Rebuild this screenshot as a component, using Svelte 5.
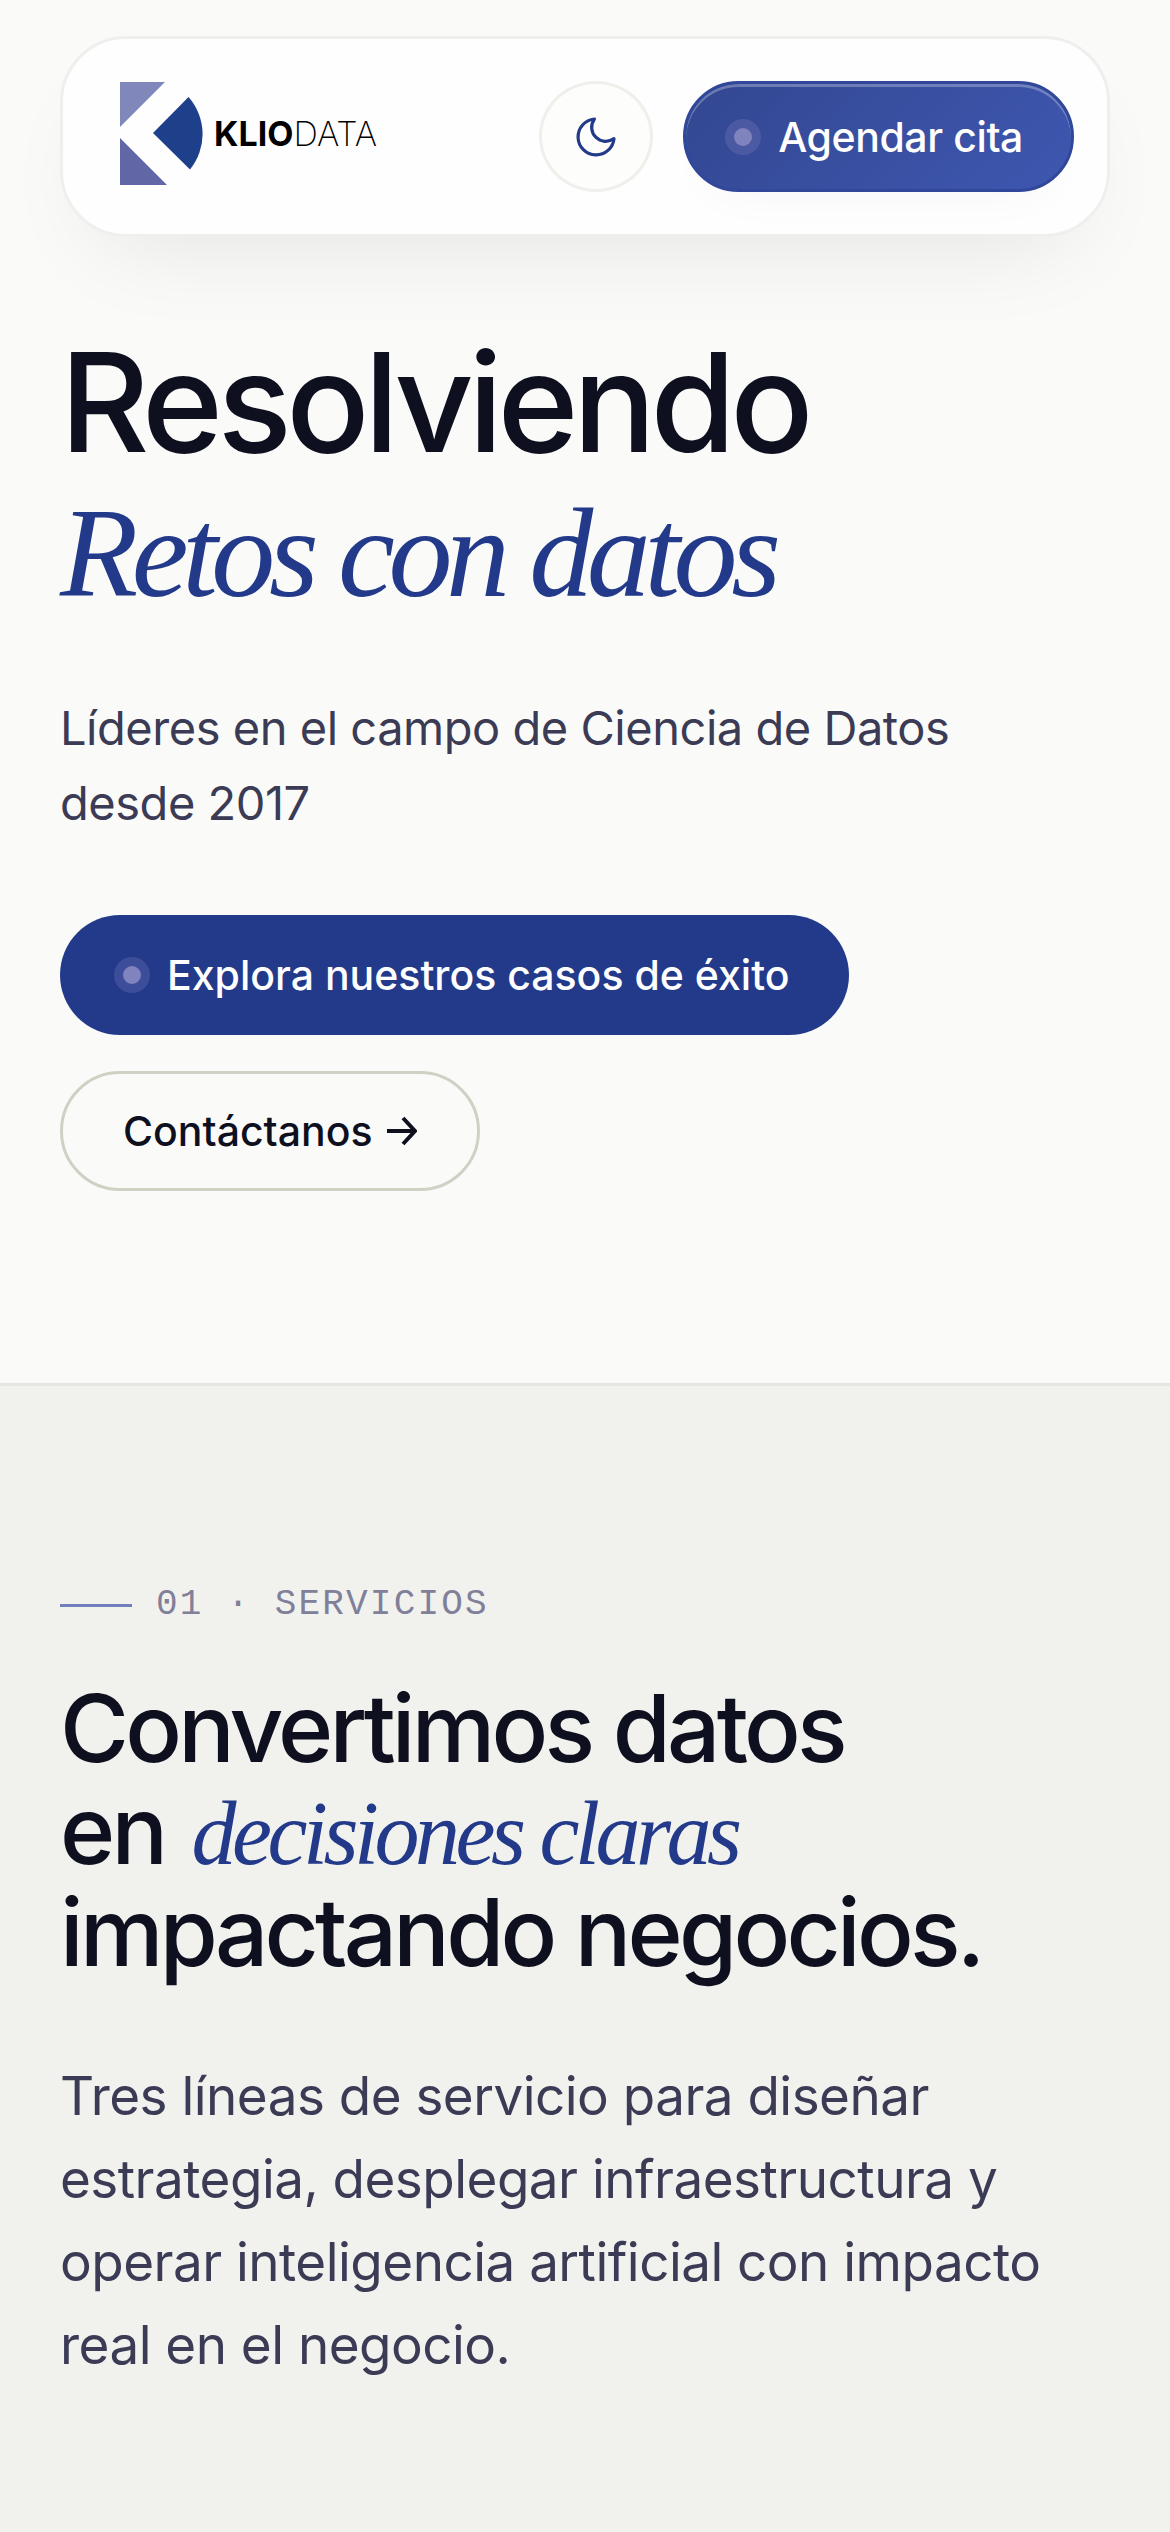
<script lang="ts">
    let dark = false;

    const service = {
        index: '01',
        label: 'Servicios',
        text: 'Tres líneas de servicio para diseñar estrategia, desplegar infraestructura y operar inteligencia artificial con impacto real en el negocio.'
    };
</script>

<div class="page">
    <header class="nav">
        <a class="brand" href="#inicio" aria-label="Kliodata">
            <svg class="mark" viewBox="0 0 84 104" aria-hidden="true">
                <path d="M0 0h45L0 45z" fill="#8088bb" />
                <path d="M0 56v47h47z" fill="#6066a6" />
                <path d="M33 51 68.500 15A56 56 0 0 1 70 87.500z" fill="#1e408b" />
            </svg>
            <span class="wordmark"><b>KLIO</b>DATA</span>
        </a>
        <div class="actions">
            <button
                class="theme"
                type="button"
                aria-label="Cambiar tema"
                aria-pressed={dark}
                on:click={() => (dark = !dark)}
            >
                <svg viewBox="0 0 24 24" aria-hidden="true">
                    <path d="M21 12.790A9 9 0 1 1 11.210 3 7 7 0 0 0 21 12.790z" />
                </svg>
            </button>
            <a class="btn cta" href="#cita"><span class="dot"></span>Agendar cita</a>
        </div>
    </header>

    <section class="hero" id="inicio">
        <h1>Resolviendo<br /><em>Retos con datos</em></h1>
        <p>Líderes en el campo de Ciencia de Datos desde 2017</p>
        <div class="links">
            <a class="btn primary" href="#casos"><span class="dot"></span>Explora nuestros casos de éxito</a>
            <a class="btn outline" href="#contacto">
                Contáctanos
                <svg class="arrow" viewBox="0 0 30 30" aria-hidden="true">
                    <path d="M0 15h28M16 2l12 13-12 13" />
                </svg>
            </a>
        </div>
    </section>

    <section class="services" id="servicios">
        <div class="eyebrow">{service.index} · {service.label}</div>
        <h2>Convertimos datos<br />en <em>decisiones claras</em><br />impactando negocios.</h2>
        <p>{service.text}</p>
    </section>
</div>

<style>
    :global(body) {
        margin: 0;
        background: #f1f2ed;
    }
    .page {
        --ink: #0f101f;
        --soft: #3b3b55;
        --blue: #233a8b;
        min-height: 100vh;
        display: flex;
        flex-direction: column;
        background: #fafbf8;
        color: var(--ink);
        font-family: Inter, "Liberation Sans", sans-serif;
    }
    a {
        color: inherit;
        text-decoration: none;
    }
    h1,
    h2,
    p {
        margin: 0;
    }

    .nav {
        display: flex;
        align-items: center;
        justify-content: space-between;
        margin: 36px 60px 0;
        padding: 42px 33px 42px 57px;
        border: 3px solid #efefed;
        border-radius: 66px;
        background: #fefefe;
        box-shadow: 0 42px 96px -42px rgba(15, 16, 31, 0.1);
    }
    .brand {
        display: flex;
        align-items: center;
        gap: 10px;
        padding-bottom: 6px;
    }
    .mark {
        width: 84px;
        height: 104px;
    }
    .wordmark {
        color: #000;
        font-size: 34px;
        line-height: 40px;
        font-weight: 200;
    }
    .wordmark b {
        font-weight: 700;
    }
    .actions {
        display: flex;
        align-items: center;
        gap: 30px;
    }
    .theme {
        display: grid;
        place-items: center;
        box-sizing: border-box;
        width: 114px;
        height: 111px;
        padding: 0;
        border: 3px solid #efefec;
        border-radius: 50%;
        background: #fdfdfb;
        cursor: pointer;
    }
    .theme svg {
        width: 48px;
        height: 48px;
        fill: none;
        stroke: var(--blue);
        stroke-width: 1.6;
        stroke-linecap: round;
        stroke-linejoin: round;
    }

    .btn {
        display: inline-flex;
        align-items: center;
        box-sizing: border-box;
        height: 120px;
        border-radius: 60px;
        font-size: 41px;
        font-weight: 500;
        white-space: nowrap;
    }
    .dot {
        width: 18px;
        height: 18px;
        margin: 0 26px 0 9px;
        border-radius: 50%;
        background: #8083bd;
        box-shadow: 0 0 0 9px rgba(128, 131, 189, 0.28);
    }
    .cta {
        height: 111px;
        padding: 0 48px 0 39px;
        border: 3px solid #30479a;
        background: linear-gradient(135deg, #334791, #3e57b0);
        box-shadow: inset 0 3px 0 rgba(255, 255, 255, 0.28), 0 24px 48px -24px rgba(35, 58, 139, 0.04);
        color: #fff;
        letter-spacing: -0.01em;
    }
    .primary {
        padding: 0 60px 0 54px;
        background: var(--blue);
        color: #fff;
    }
    .outline {
        gap: 14px;
        padding: 0 60px;
        border: 3px solid #d0d1c5;
    }
    .arrow {
        width: 30px;
        height: 30px;
        fill: none;
        stroke: currentColor;
        stroke-width: 4;
    }

    .hero {
        padding: 93px 60px 192px;
    }
    .hero h1 {
        font-size: 138px;
        line-height: 144px;
        font-weight: 500;
        letter-spacing: -0.04em;
    }
    em {
        color: var(--blue);
        font-family: "Liberation Serif", serif;
        font-style: italic;
        font-weight: 400;
        line-height: 1;
        letter-spacing: -0.05em;
    }
    .hero em {
        font-size: 128px;
    }
    .hero p {
        max-width: 960px;
        margin-top: 72px;
        color: var(--soft);
        font-size: 47px;
        line-height: 75px;
        letter-spacing: -0.01em;
    }
    .links {
        display: flex;
        flex-wrap: wrap;
        gap: 36px;
        margin-top: 75px;
    }

    .services {
        flex: 1;
        padding: 192px 60px 144px;
        border-top: 3px solid #e5e6e1;
        background: #f1f2ed;
    }
    .eyebrow {
        display: flex;
        align-items: center;
        gap: 24px;
        color: #80809a;
        font-family: "Liberation Mono", monospace;
        font-size: 36px;
        line-height: 54px;
        letter-spacing: 0.06em;
        text-transform: uppercase;
    }
    .eyebrow::before {
        content: "";
        width: 72px;
        height: 3px;
        background: #7080bd;
    }
    .services h2 {
        margin-top: 45px;
        font-size: 94px;
        line-height: 102px;
        font-weight: 500;
        letter-spacing: -0.04em;
    }
    .services em {
        margin-left: 6px;
        font-size: 90px;
    }
    .services p {
        margin-top: 72px;
        color: var(--soft);
        font-size: 53px;
        line-height: 83px;
        letter-spacing: -0.01em;
    }
</style>
